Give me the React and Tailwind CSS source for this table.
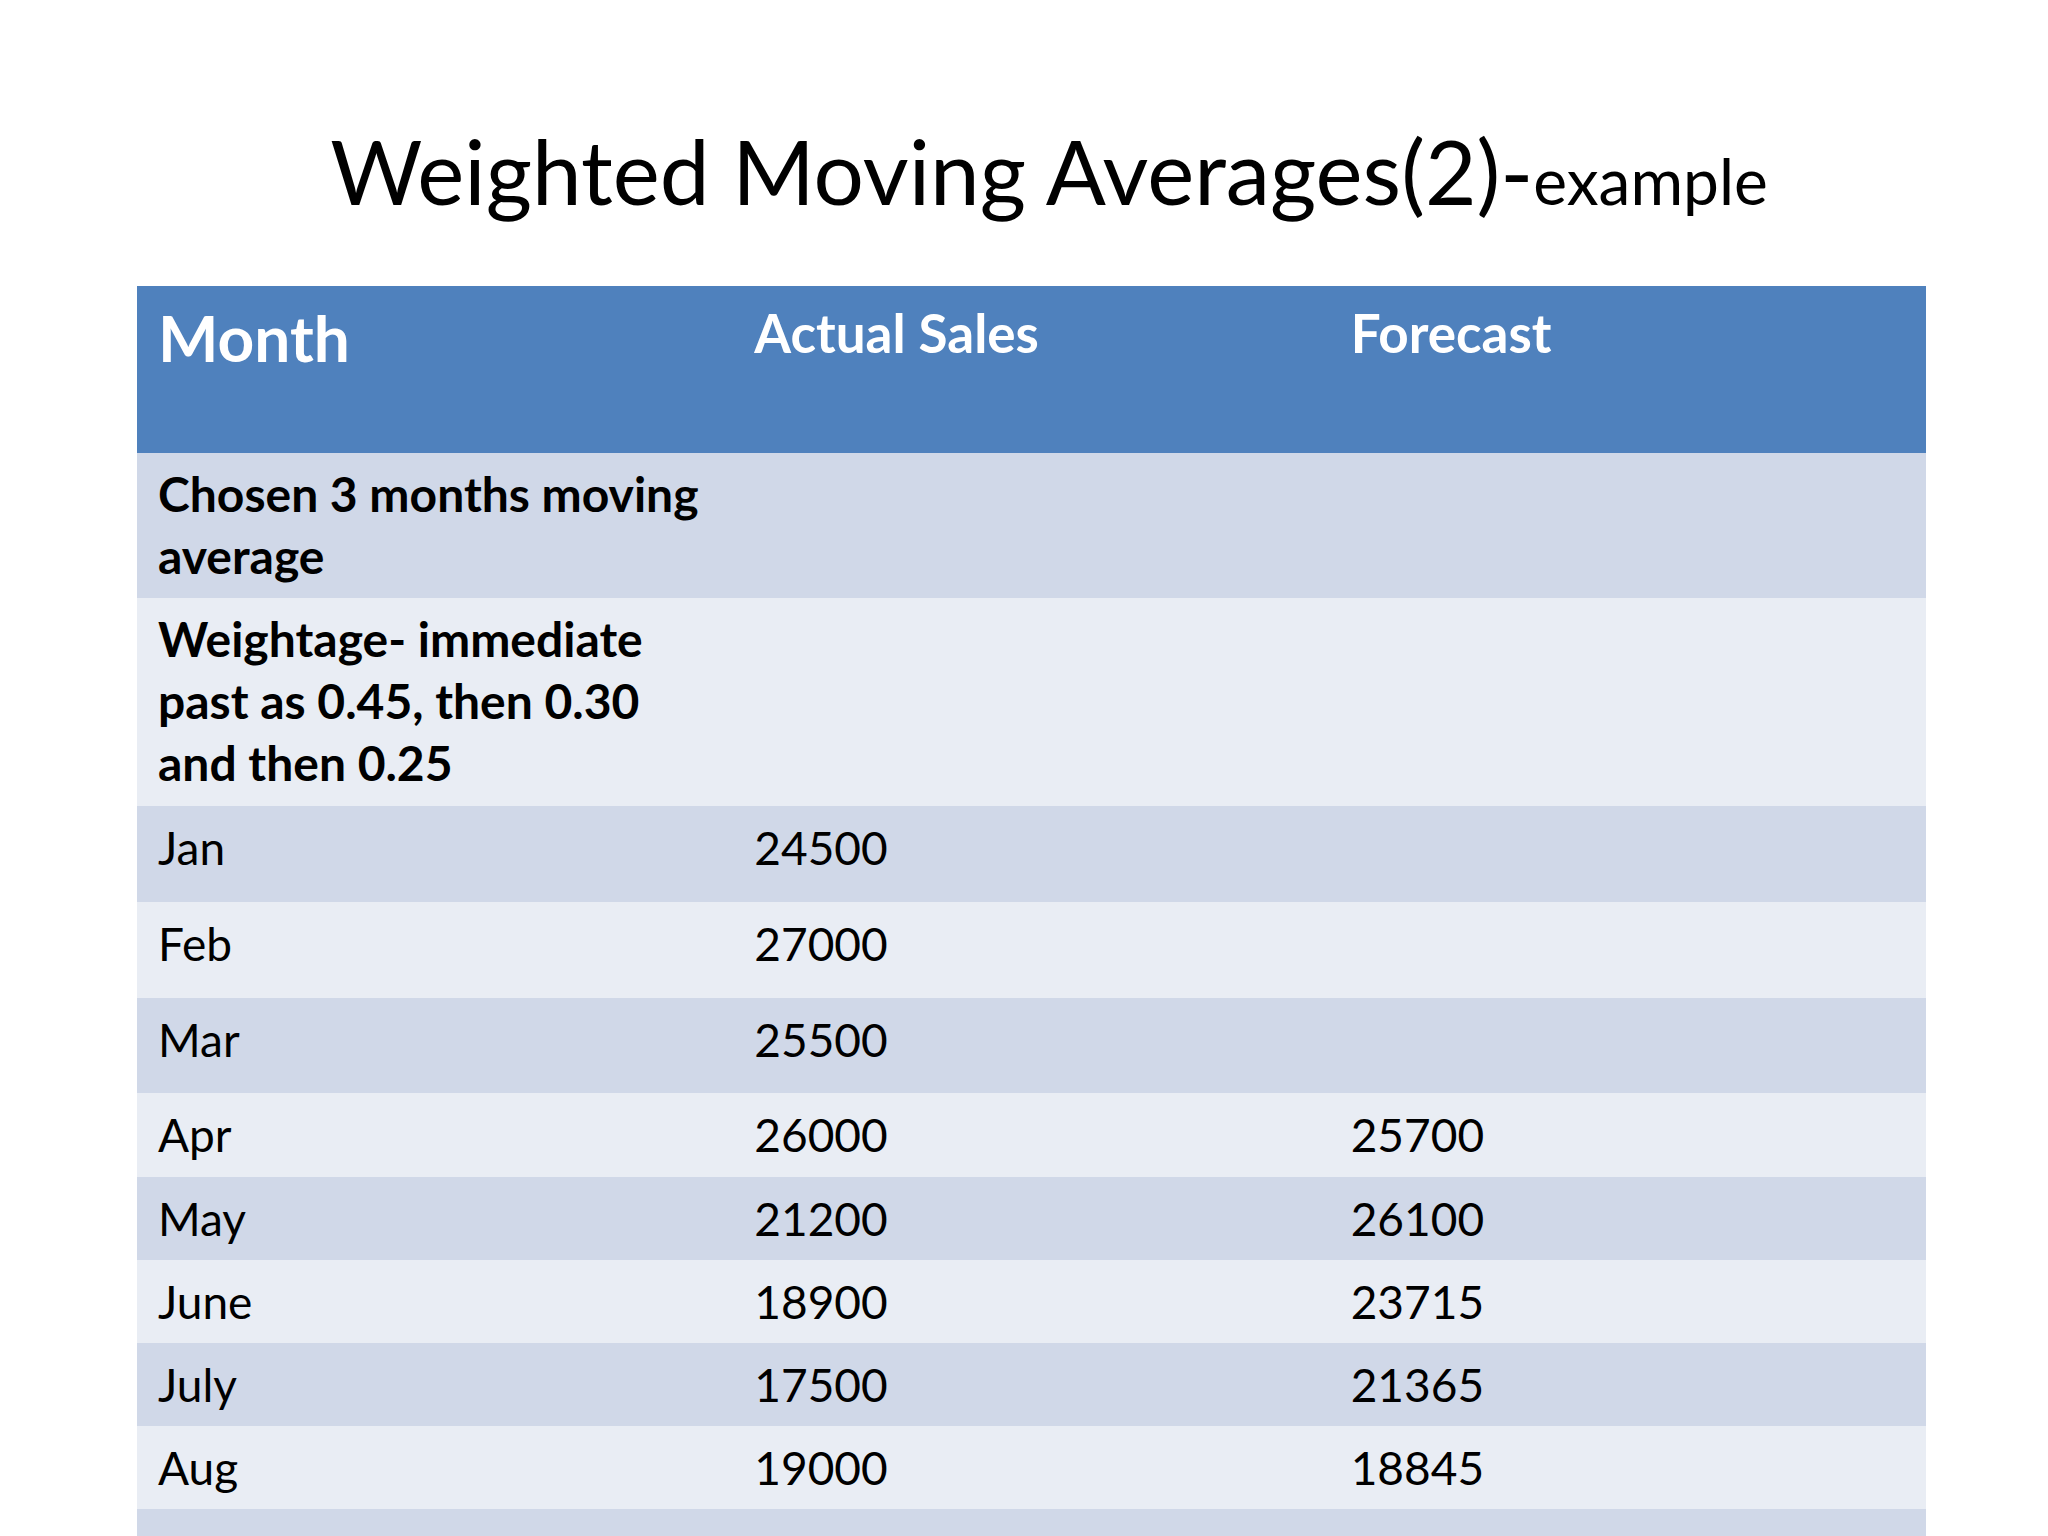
const rows = [
  { month: "Jan", sales: "24500", forecast: "", h: "h-[96px]" },
  { month: "Feb", sales: "27000", forecast: "", h: "h-[96px]" },
  { month: "Mar", sales: "25500", forecast: "", h: "h-[95px]" },
  { month: "Apr", sales: "26000", forecast: "25700", h: "h-[84px]" },
  { month: "May", sales: "21200", forecast: "26100", h: "h-[83px]" },
  { month: "June", sales: "18900", forecast: "23715", h: "h-[83px]" },
  { month: "July", sales: "17500", forecast: "21365", h: "h-[83px]" },
  { month: "Aug", sales: "19000", forecast: "18845", h: "h-[83px]" },
];

function App() {
  return (
    <div className="w-[2048px] h-[1536px] bg-white overflow-hidden font-['Lato',sans-serif] text-black">
      <h1 className="pl-[50px] pt-[126px] text-center text-[89px] leading-[89px] font-normal h-[286px]">
        Weighted Moving Averages(2)-<span className="text-[64px] leading-none">example</span>
      </h1>

      <div className="ml-[137px] w-[1789px]">
        {/* header */}
        <div className="grid grid-cols-3 h-[167px] bg-[#4f81bd] text-white font-bold">
          <div className="pl-[21px] pt-[20px] text-[64px] leading-none">Month</div>
          <div className="pl-[21px] pt-[20px] text-[53px] leading-none">Actual Sales</div>
          <div className="pl-[21px] pt-[20px] text-[53px] leading-none">Forecast</div>
        </div>

        <div className="grid grid-cols-3 h-[145px] bg-[#d0d8e8] font-bold text-[48px] leading-[62px]">
          <div className="pl-[21px] pt-[10px]">
            Chosen 3 months moving
            <br />
            average
          </div>
          <div></div>
          <div></div>
        </div>

        <div className="grid grid-cols-3 h-[208px] bg-[#e9edf4] font-bold text-[48px] leading-[62px]">
          <div className="pl-[21px] pt-[10px]">
            Weightage- immediate
            <br />
            past as 0.45, then 0.30
            <br />
            and then 0.25
          </div>
          <div></div>
          <div></div>
        </div>

        {rows.map((r, i) => (
          <div
            key={r.month}
            className={`grid grid-cols-3 ${r.h} text-[46px] leading-none ${i % 2 === 0 ? "bg-[#d0d8e8]" : "bg-[#e9edf4]"}`}
          >
            <div className="pl-[21px] pt-[19px]">{r.month}</div>
            <div className="pl-[21px] pt-[19px]">{r.sales}</div>
            <div className="pl-[21px] pt-[19px]">{r.forecast}</div>
          </div>
        ))}

        <div className="h-[83px] bg-[#d0d8e8]"></div>
      </div>
    </div>
  );
}

export default App;
